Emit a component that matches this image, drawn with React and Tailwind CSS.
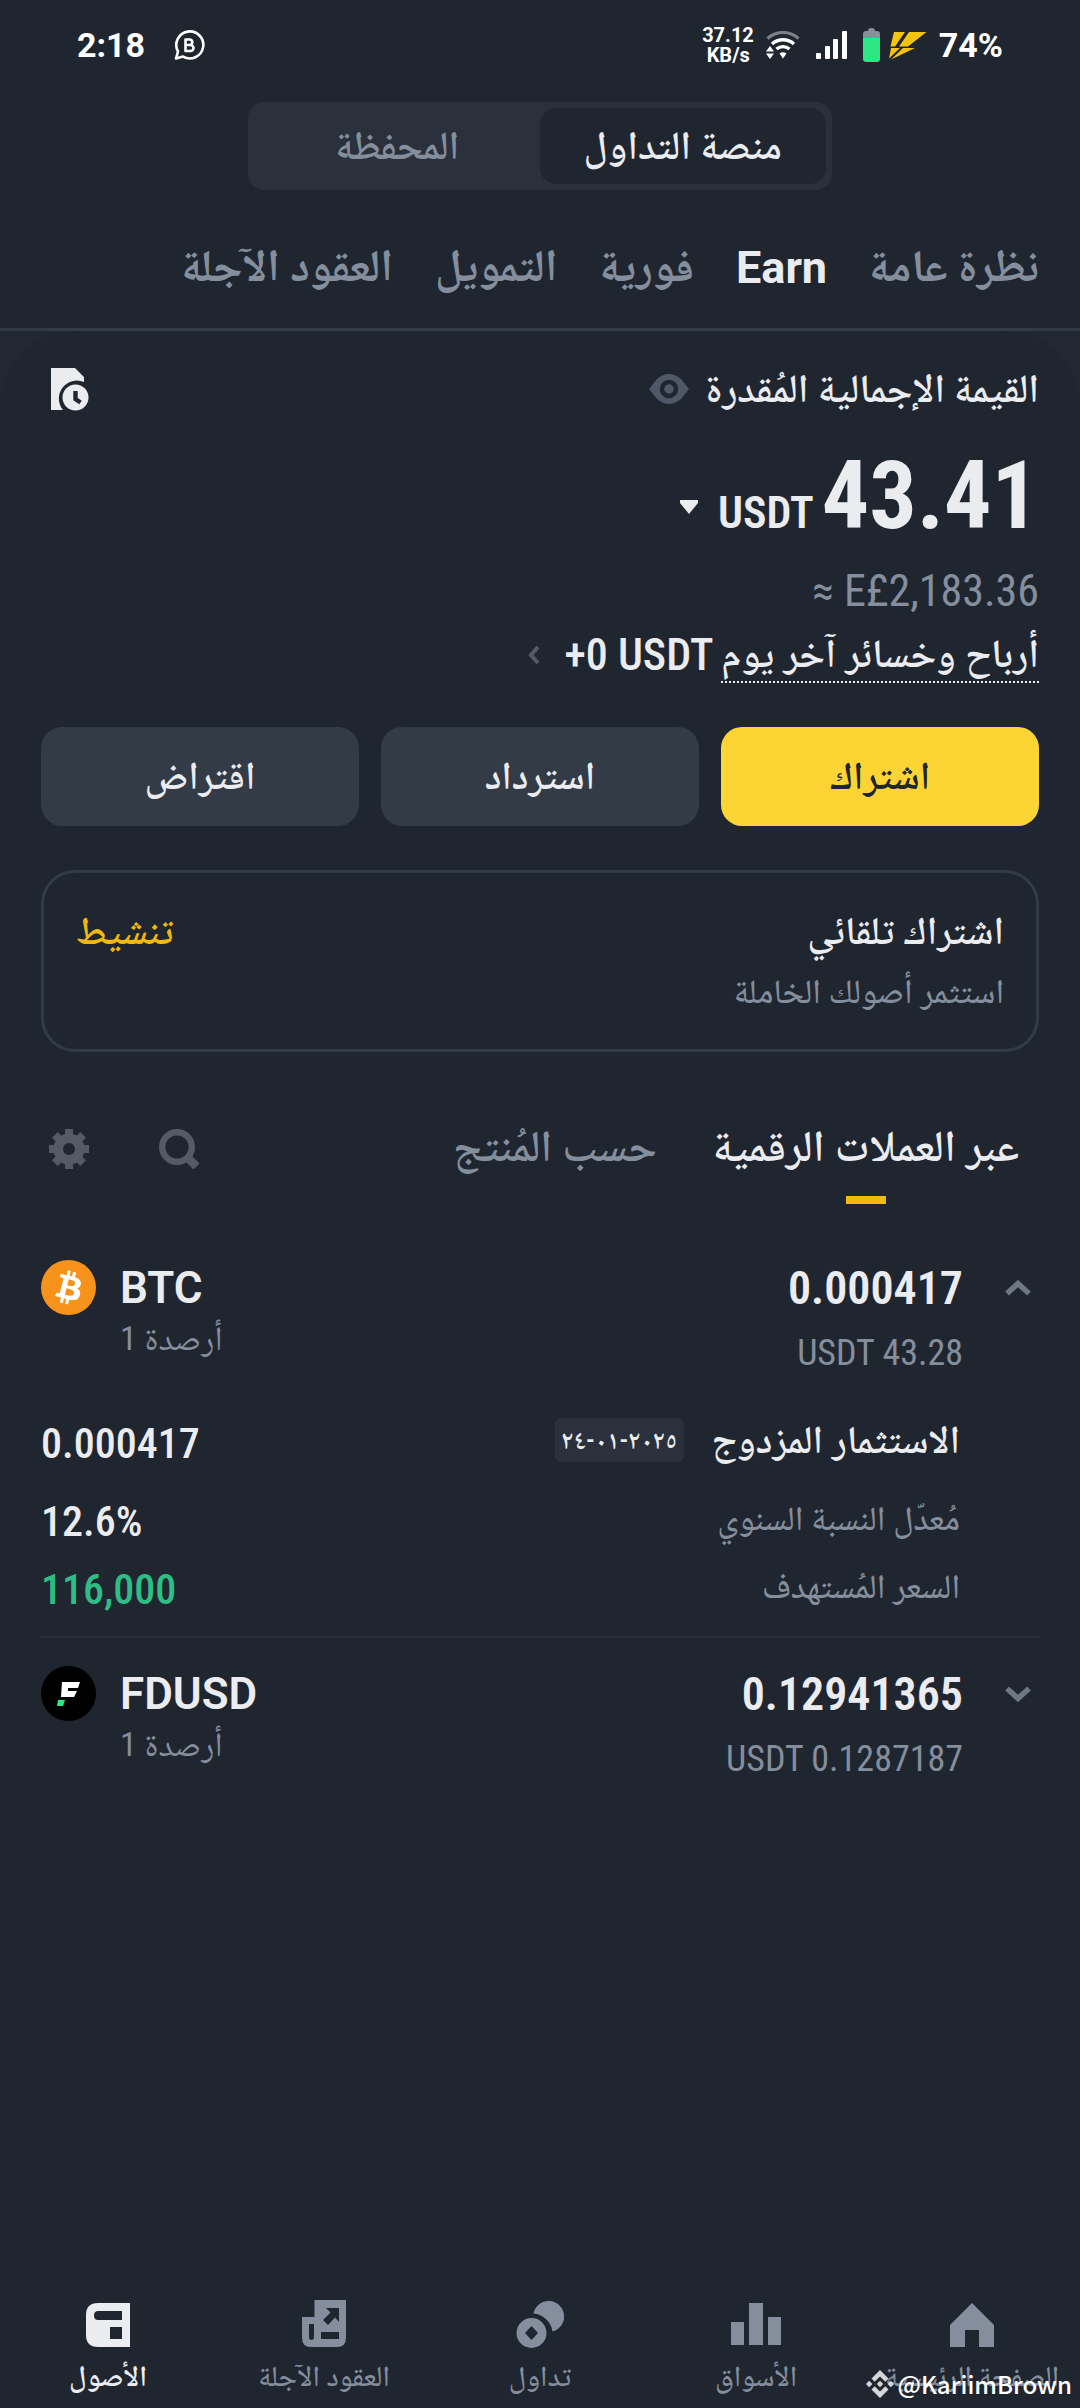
import { useState } from 'react';
import clsx from 'clsx';

const accountTabs = ['نظرة عامة', 'Earn', 'فورية', 'التمويل', 'العقود الآجلة'];

function WhatsAppBusinessIcon() {
  return (
    <svg viewBox="0 0 32 32" className="w-8 h-8" fill="none" aria-hidden="true">
      <path d="M3 29.500L5 22.500A13.500 13.500 0 1 1 10 27.600Z" stroke="#fff" strokeWidth="2.600" strokeLinejoin="round" />
      <path d="M12.500 10.500H17A2.800 2.800 0 0 1 17 16H12.500ZM12.500 16H17.500A3 3 0 0 1 17.500 22H12.500Z" stroke="#fff" strokeWidth="2.600" strokeLinejoin="round" />
    </svg>
  );
}

function WifiIcon() {
  return (
    <svg viewBox="0 0 34 28" className="w-[34px] h-7" fill="none" aria-hidden="true">
      <path d="M1.500 7.500A23 23 0 0 1 32.500 7.500" stroke="#7b808b" strokeWidth="3.200" />
      <path d="M6 13A16.500 16.500 0 0 1 28 13" stroke="#fff" strokeWidth="3.400" />
      <path d="M10.500 18A10 10 0 0 1 23.500 18" stroke="#fff" strokeWidth="3.400" />
      <path d="M13.500 22.500Q17 20 20.500 22.500L17 27.500Z" fill="#fff" />
      <path d="M0 20.500L4 15L8 20.500ZM0 22.500H8L4 28Z" fill="#fff" />
    </svg>
  );
}

function SignalIcon() {
  return (
    <svg viewBox="0 0 31 28" className="w-[31px] h-7" fill="#fff" aria-hidden="true">
      <rect x="0" y="22" width="5" height="6" rx="1" />
      <rect x="9" y="15" width="5" height="13" rx="1" />
      <rect x="17" y="8" width="5" height="20" rx="1" />
      <rect x="26" y="0" width="5" height="28" rx="1" />
    </svg>
  );
}

function BatteryIcon() {
  return (
    <svg viewBox="0 0 17 34" className="w-[17px] h-[34px]" aria-hidden="true">
      <path d="M5 3Q5 0 8.500 0T12 3H14Q17 3 17 6V10H0V6Q0 3 3 3Z" fill="#8c8f98" />
      <path d="M0 10H17V31Q17 34 14 34H3Q0 34 0 31Z" fill="#2ee684" />
    </svg>
  );
}

function BoltIcon() {
  return (
    <svg viewBox="0 0 39 29" className="w-[39px] h-[29px]" aria-hidden="true">
      <path d="M6 1H17L7 15.500H2.500Z" fill="#f5c311" />
      <path d="M21 1H38.500L20 15.500H11Z" fill="#f5c311" />
      <path d="M3 17H12L1 27.500Z" fill="#f5c311" />
      <path d="M15 17H27L3 28.500Z" fill="#f5c311" />
    </svg>
  );
}

function HistoryIcon() {
  return (
    <svg viewBox="0 0 38 43" className="w-[38px] h-[43px]" aria-hidden="true">
      <path d="M0 0H24L33 9V14A18 18 0 0 0 12 42H0Z" fill="#eaecef" />
      <circle cx="24.500" cy="29.500" r="13" fill="#eaecef" />
      <path d="M24.500 23V31L29.500 34.500" fill="none" stroke="#202630" strokeWidth="4.400" />
    </svg>
  );
}

function EyeIcon() {
  return (
    <svg viewBox="0 0 40 30" className="w-10 h-[30px]" aria-hidden="true">
      <path d="M0 15L8 5Q20 -5 32 5L40 15L32 25Q20 35 8 25Z" fill="#4f5867" />
      <circle cx="20" cy="15" r="7" fill="none" stroke="#202630" strokeWidth="4.500" />
    </svg>
  );
}

function SearchIcon() {
  return (
    <svg viewBox="0 0 40 40" className="w-10 h-10" fill="none" stroke="#545a66" aria-hidden="true">
      <circle cx="18" cy="18" r="14.800" strokeWidth="6.400" />
      <path d="M27 27L37.500 37.500" strokeWidth="8.500" />
    </svg>
  );
}

function GearIcon() {
  return (
    <svg viewBox="0 0 40 40" className="w-10 h-10" aria-hidden="true">
      <g fill="#545a66">
        <rect x="16" y="0" width="8" height="40" />
        <rect x="16" y="0" width="8" height="40" transform="rotate(45 20 20)" />
        <rect x="16" y="0" width="8" height="40" transform="rotate(90 20 20)" />
        <rect x="16" y="0" width="8" height="40" transform="rotate(135 20 20)" />
        <circle cx="20" cy="20" r="15.500" />
      </g>
      <circle cx="20" cy="20" r="6" fill="#202630" />
    </svg>
  );
}

function Chevron({ className }) {
  return (
    <svg viewBox="0 0 26 16" className={clsx('w-[26px] h-4', className)} fill="none" stroke="#6f7784" aria-hidden="true">
      <path d="M2 13.500L13 3.500L24 13.500" strokeWidth="5.500" />
    </svg>
  );
}

function BtcIcon() {
  return (
    <svg viewBox="0 0 32 32" className="w-[55px] h-[55px]" aria-hidden="true">
      <circle cx="16" cy="16" r="16" fill="#f7931a" />
      <path
        fill="#fff"
        d="M23.189 14.020c.314-2.096-1.283-3.223-3.465-3.975l.708-2.840-1.728-.430-.690 2.765c-.454-.114-.920-.220-1.385-.326l.695-2.783L15.596 6l-.708 2.839c-.376-.086-.746-.170-1.104-.260l.002-.009-2.384-.595-.460 1.846s1.283.294 1.256.312c.700.175.826.638.805 1.006l-.806 3.235c.048.012.110.030.180.057l-.183-.045-1.130 4.532c-.086.212-.303.531-.793.410.018.025-1.256-.313-1.256-.313l-.858 1.978 2.250.561c.418.105.828.215 1.231.318l-.715 2.872 1.727.430.708-2.840c.472.127.930.245 1.378.357l-.706 2.828 1.728.430.715-2.866c2.948.558 5.164.333 6.097-2.333.752-2.146-.037-3.385-1.588-4.192 1.130-.260 1.980-1.003 2.207-2.538zm-3.950 5.538c-.533 2.147-4.148.986-5.320.695l.950-3.805c1.172.293 4.929.872 4.370 3.110zm.535-5.569c-.487 1.953-3.495.960-4.470.717l.860-3.450c.975.243 4.118.696 3.610 2.733z"
      />
    </svg>
  );
}

function FdusdIcon() {
  return (
    <svg viewBox="0 0 55 55" className="w-[55px] h-[55px]" aria-hidden="true">
      <circle cx="27.500" cy="27.500" r="27.500" fill="#000" />
      <path d="M21 16H39L37 22H27V25H36L33 31H20Z" fill="#fff" />
      <path d="M17 34H24L22 40H16Z" fill="#2ee684" />
    </svg>
  );
}

function HomeIcon() {
  return (
    <svg viewBox="0 0 48 48" className="w-12 h-12" fill="currentColor" aria-hidden="true">
      <path d="M24 3L46 25V47H31V30H17V47H2V25Z" />
    </svg>
  );
}

function MarketsIcon() {
  return (
    <svg viewBox="0 0 50 48" className="w-[50px] h-12" fill="currentColor" aria-hidden="true">
      <rect x="0" y="22" width="13" height="23" />
      <rect x="18" y="3" width="14" height="42" />
      <rect x="37" y="17" width="13" height="28" />
    </svg>
  );
}

function TradeIcon() {
  return (
    <svg viewBox="0 0 48 48" className="w-12 h-12" aria-hidden="true">
      <path d="M17.500 13.500A15.500 15.500 0 1 1 36.500 31.500A21 21 0 0 0 17.500 13.500Z" fill="currentColor" />
      <path d="M15.500 18A15 15 0 1 0 15.500 48A15 15 0 1 0 15.500 18ZM15.500 26L22 33L15.500 40L9 33Z" fill="currentColor" fillRule="evenodd" />
    </svg>
  );
}

function FuturesIcon() {
  return (
    <svg viewBox="0 0 44 48" className="w-11 h-12" aria-hidden="true">
      <path
        fill="currentColor"
        fillRule="evenodd"
        d="M12.500 0H44V38Q44 47 35 47H9Q0 47 0 38V17H12.500ZM7 24V37Q7 40 9.500 40T12 37V24ZM19 32V39H37V32ZM24 8L28.500 12.500L21 20L26 25L33 17.500L37 22V8Z"
      />
    </svg>
  );
}

function AssetsIcon() {
  return (
    <svg viewBox="0 0 44 48" className="w-11 h-12" aria-hidden="true">
      <path
        fill="currentColor"
        fillRule="evenodd"
        d="M12 3H44V47H12Q0 47 0 35V15Q0 3 12 3ZM36 11H12Q8 11 8 15.500T12 20H36ZM24 27V39H36V27Z"
      />
    </svg>
  );
}

const navItems = [
  { label: 'الصفحة الرئيسية', icon: HomeIcon },
  { label: 'الأسواق', icon: MarketsIcon },
  { label: 'تداول', icon: TradeIcon },
  { label: 'العقود الآجلة', icon: FuturesIcon },
  { label: 'الأصول', icon: AssetsIcon, active: true },
];

function StatusBar() {
  return (
    <div dir="ltr" className="flex items-center justify-between h-[90px] px-[77px] font-['Roboto',sans-serif] font-bold text-white">
      <div className="flex items-center gap-7">
        <span className="text-[34px] leading-10">2:18</span>
        <WhatsAppBusinessIcon />
      </div>
      <div className="flex items-center">
        <div className="text-[20px] leading-5 text-right">
          <p>37.12</p>
          <p className="pr-1">KB/s</p>
        </div>
        <div className="flex items-center gap-4 pl-3">
          <WifiIcon />
          <SignalIcon />
          <div className="flex items-center gap-2">
            <BatteryIcon />
            <BoltIcon />
          </div>
        </div>
        <span className="pl-3 text-[34px] leading-10">74%</span>
      </div>
    </div>
  );
}

function CoinRow({ symbol, amount, value, icon, open, onToggle }) {
  return (
    <div className="flex items-start justify-between">
      <div className="flex items-start gap-[42px]">
        <button onClick={onToggle} aria-expanded={open} aria-label={symbol} className="pr-2 pt-5">
          <Chevron className={open ? '' : 'rotate-180'} />
        </button>
        <div dir="ltr" className="text-right">
          <p className="text-[46px] leading-[56px] font-semibold">{amount}</p>
          <p className="pt-2 text-[36px] leading-[58px] text-[#848e9c]">USDT {value}</p>
        </div>
      </div>
      <div dir="ltr" className="flex items-start gap-6">
        {icon}
        <div>
          <p className="font-['Roboto',sans-serif] text-[44px] leading-[56px] font-semibold">{symbol}</p>
          <p dir="rtl" className="text-left text-[34px] leading-[44px] text-[#848e9c]">أرصدة 1</p>
        </div>
      </div>
    </div>
  );
}

export default function App() {
  const [tab, setTab] = useState('Earn');
  const [openCoin, setOpenCoin] = useState('BTC');

  const toggle = (coin) => setOpenCoin(openCoin === coin ? null : coin);

  return (
    <div
      dir="rtl"
      lang="ar"
      className="min-h-screen flex flex-col bg-[#202630] text-[#eaecef] font-['Roboto_Condensed','Noto_Naskh_Arabic','Noto_Sans',sans-serif]"
    >
      <StatusBar />

      {/* Exchange / wallet switch */}
      <div className="mx-auto mt-3 flex w-[54%] h-[88px] p-[6px] rounded-2xl bg-[#2b313c] text-[40px] leading-[60px] font-semibold">
        <button className="flex-1 rounded-2xl bg-[#202630]">منصة التداول</button>
        <button className="flex-1 text-[#848e9c]">المحفظة</button>
      </div>

      <nav className="flex gap-[42px] px-[41px] pt-11 pb-[30px] border-b-3 border-[#333b47] text-[45px] leading-[60px] font-bold">
        {accountTabs.map((t) => (
          <button
            key={t}
            onClick={() => setTab(t)}
            className={clsx('whitespace-nowrap', t === 'Earn' && "pt-1 font-['Roboto',sans-serif]", t === tab ? 'text-[#eaecef]' : 'text-[#848e9c]')}
          >
            {t}
          </button>
        ))}
      </nav>

      <div className="bg-[#222832]">
        <main className="rounded-t-[75px] bg-[#202630] px-[41px] pt-7">
          {/* Balance */}
          <div className="flex items-center justify-between">
            <div className="flex items-center gap-4">
              <h1 className="text-[40px] leading-[60px] font-semibold">القيمة الإجمالية المُقدرة</h1>
              <button aria-label="إخفاء الرصيد"><EyeIcon /></button>
            </div>
            <button aria-label="السجل" className="pl-[10px]"><HistoryIcon /></button>
          </div>

          <div className="flex items-baseline gap-2 pt-6">
            <span className="text-[94px] leading-[106px] font-bold">43.41</span>
            <button className="flex items-center gap-5 text-[44px] leading-[56px] font-semibold">
              USDT
              <svg viewBox="0 0 18 14" className="mb-3 w-[18px] h-[14px]" fill="#eaecef" aria-hidden="true">
                <path d="M0 0H18V3L9 14L0 3Z" />
              </svg>
            </button>
          </div>

          <p className="pt-[14px] text-[44px] leading-[56px] text-[#848e9c]"><bdi dir="ltr">≈ E£2,183.36</bdi></p>

          <a href="#pnl" className="flex items-center gap-2 pt-2">
            <span className="border-b-2 border-dotted border-[#eaecef] text-[40px] leading-[54px] font-semibold">أرباح وخسائر آخر يوم</span>
            <span dir="ltr" className="text-[44px] leading-[56px] font-medium">+0 USDT</span>
            <svg viewBox="0 0 12 20" className="mr-4 w-3 h-5" fill="none" stroke="#545a66" strokeWidth="4" aria-hidden="true">
              <path d="M10 2L3 10L10 18" />
            </svg>
          </a>

          <div className="grid grid-cols-3 gap-[22px] pt-11 text-[39px] leading-[59px] font-semibold">
            <button className="rounded-[21px] bg-[#fcd535] py-5 text-[#202630]">اشتراك</button>
            <button className="rounded-[21px] bg-[#333b47] py-5">استرداد</button>
            <button className="rounded-[21px] bg-[#333b47] py-5">اقتراض</button>
          </div>

          <section className="mt-11 flex items-start justify-between rounded-[34px] border-3 border-[#333b47] px-8 py-7">
            <div>
              <h2 className="text-[39px] leading-[60px] font-semibold">اشتراك تلقائي</h2>
              <p className="text-[34px] leading-[60px] font-medium text-[#848e9c]">استثمر أصولك الخاملة</p>
            </div>
            <button className="text-[39px] leading-[60px] font-semibold text-[#f0b90b]">تنشيط</button>
          </section>

          {/* Holdings */}
          <div className="flex items-start justify-between pt-16 px-2">
            <div className="flex gap-14 pr-3 text-[44px] leading-[60px]">
              <button className="flex flex-col items-center gap-5 font-semibold">
                عبر العملات الرقمية
                <span className="w-10 h-2 bg-[#f0b90b]" />
              </button>
              <button className="self-start font-semibold text-[#848e9c]">حسب المُنتج</button>
            </div>
            <div className="flex gap-[70px] pt-[13px]">
              <button aria-label="بحث"><SearchIcon /></button>
              <button aria-label="الإعدادات"><GearIcon /></button>
            </div>
          </div>

          <div className="pt-14">
            <CoinRow symbol="BTC" amount="0.000417" value="43.28" icon={<BtcIcon />} open={openCoin === 'BTC'} onToggle={() => toggle('BTC')} />
            {openCoin === 'BTC' && (
              <dl className="pr-[79px] pt-8">
                <div className="flex items-start justify-between">
                  <dt className="flex items-center gap-7">
                    <span className="text-[39px] leading-[52px] font-semibold">الاستثمار المزدوج</span>
                    <span className="rounded-md bg-[#2b313c] px-[6px] text-[26px] leading-[44px] font-semibold">٢٠٢٥-٠١-٢٤</span>
                  </dt>
                  <dd dir="ltr" className="text-[42px] leading-[60px] font-medium">0.000417</dd>
                </div>
                <div className="flex items-start justify-between pt-[18px]">
                  <dt className="text-[34px] leading-[52px] font-medium text-[#848e9c]">مُعدّل النسبة السنوي</dt>
                  <dd dir="ltr" className="text-[42px] leading-[60px] font-medium">12.6%</dd>
                </div>
                <div className="flex items-start justify-between pt-2">
                  <dt className="text-[34px] leading-[52px] font-medium text-[#848e9c]">السعر المُستهدف</dt>
                  <dd dir="ltr" className="text-[42px] leading-[60px] font-medium text-[#2ebd85]">116,000</dd>
                </div>
              </dl>
            )}
          </div>

          <div className="mt-4 border-t-2 border-[#2b313c] pt-7">
            <CoinRow symbol="FDUSD" amount="0.12941365" value="0.1287187" icon={<FdusdIcon />} open={openCoin === 'FDUSD'} onToggle={() => toggle('FDUSD')} />
          </div>
        </main>
      </div>

      {/* Bottom bar */}
      <footer className="relative mt-auto">
        <nav className="grid grid-cols-5 pb-2">
          {navItems.map(({ label, icon: Icon, active }) => (
            <a key={label} href="#nav" className={clsx('flex flex-col items-center gap-1', active ? 'font-semibold text-[#eaecef]' : 'font-medium text-[#848e9c]')}>
              <Icon />
              <span className="text-[29px] leading-[48px] whitespace-nowrap">{label}</span>
            </a>
          ))}
        </nav>
        <div dir="ltr" className="absolute right-2 bottom-2 flex items-center gap-1 font-['Noto_Sans_CJK_SC','Noto_Sans',sans-serif] text-[24px] leading-8 font-medium text-white">
          <svg viewBox="0 0 28 28" className="w-7 h-7" fill="#d6d6d8" aria-hidden="true">
            <path d="M14 0L22.500 8.500L19.300 11.700L14 6.400L8.700 11.700L5.500 8.500ZM3.200 10.800L6.400 14L3.200 17.200L0 14ZM24.800 10.800L28 14L24.800 17.200L21.600 14ZM14 10.800L17.200 14L14 17.200L10.800 14ZM14 28L5.500 19.500L8.700 16.300L14 21.600L19.300 16.300L22.500 19.500Z" />
          </svg>
          @KariimBrown
        </div>
      </footer>
    </div>
  );
}
